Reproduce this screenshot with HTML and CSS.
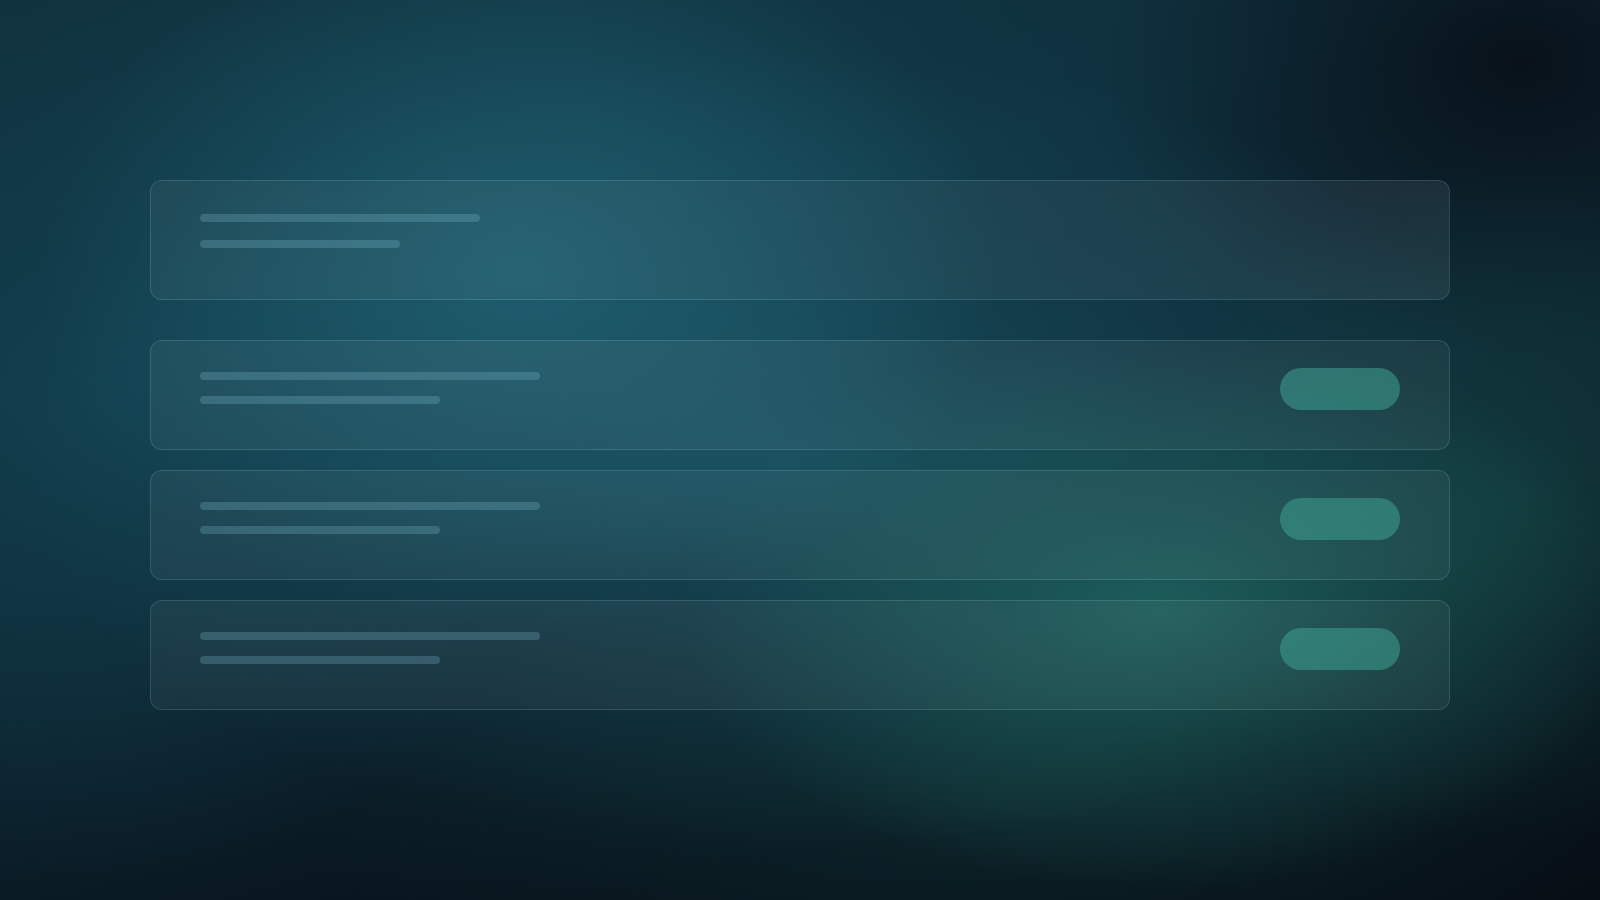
FILE: index.html
```html
<!DOCTYPE html>
<html lang="en">
<head>
<meta charset="utf-8">
<title>List</title>
<link rel="stylesheet" href="styles.css">
</head>
<body>
<main class="stage">
  <section class="card card-head">
    <div class="lines">
      <span class="bar bar-280"></span>
      <span class="bar bar-200"></span>
    </div>
  </section>
  <div class="list">
    <section class="card card-row">
      <div class="lines">
        <span class="bar bar-340"></span>
        <span class="bar bar-240"></span>
      </div>
      <span class="pill"></span>
    </section>
    <section class="card card-row">
      <div class="lines">
        <span class="bar bar-340"></span>
        <span class="bar bar-240"></span>
      </div>
      <span class="pill"></span>
    </section>
    <section class="card card-row">
      <div class="lines">
        <span class="bar bar-340"></span>
        <span class="bar bar-240"></span>
      </div>
      <span class="pill"></span>
    </section>
  </div>
</main>
</body>
</html>
```

FILE: styles.css
```css
html, body {
  margin: 0;
  padding: 0;
  width: 1600px;
  height: 900px;
  overflow: hidden;
  font-family: "Inter", "Liberation Sans", sans-serif;
}

body {
  background-color: #09121a;
  background-image:
    radial-gradient(ellipse 480px 360px at 520px 270px, rgba(34, 104, 122, 0.7), rgba(34, 104, 122, 0) 100%),
    radial-gradient(ellipse 480px 280px at 1160px 610px, rgba(34, 112, 104, 0.7), rgba(34, 112, 104, 0) 100%),
    radial-gradient(ellipse 760px 400px at 780px 450px, rgba(28, 92, 108, 0.7), rgba(28, 92, 108, 0) 100%),
    radial-gradient(ellipse 560px 300px at 560px 110px, rgba(20, 66, 82, 0.55), rgba(20, 66, 82, 0) 100%),
    radial-gradient(ellipse 380px 340px at 1520px 500px, rgba(22, 78, 76, 0.55), rgba(22, 78, 76, 0) 100%),
    radial-gradient(ellipse 480px 480px at 100px 400px, rgba(20, 70, 86, 0.65), rgba(20, 70, 86, 0) 100%),
    radial-gradient(ellipse 700px 240px at 1000px 800px, rgba(18, 58, 60, 0.45), rgba(18, 58, 60, 0) 100%),
    radial-gradient(ellipse 420px 300px at 1520px 60px, rgba(8, 14, 22, 0.9), rgba(8, 14, 22, 0) 100%),
    linear-gradient(165deg, #10303b 0%, #0f3240 30%, #0c2430 55%, #08121b 80%, #060c14 100%);
}

.stage {
  box-sizing: border-box;
  padding: 180px 150px 0;
  display: flex;
  flex-direction: column;
  gap: 40px;
}

.list {
  display: flex;
  flex-direction: column;
  gap: 20px;
}

.card {
  box-sizing: border-box;
  width: 1300px;
  border: 1px solid rgba(150, 210, 220, 0.18);
  border-radius: 12px;
  background: rgba(255, 255, 255, 0.05);
  padding: 0 49px;
}

.card-head {
  height: 120px;
  padding-top: 33px;
  background: linear-gradient(90deg, rgba(255, 255, 255, 0.05), rgba(255, 255, 255, 0.045) 55%, rgba(200, 220, 235, 0.09));
}

.card-head .lines {
  gap: 18px;
}

.card-row {
  height: 110px;
  padding-top: 27px;
  display: flex;
  justify-content: space-between;
  align-items: flex-start;
}

.card-row .lines {
  padding-top: 4px;
}

.lines {
  display: flex;
  flex-direction: column;
  gap: 16px;
}

.bar {
  display: block;
  height: 8px;
  border-radius: 4px;
  background: rgba(150, 215, 230, 0.22);
}

.bar-280 { width: 280px; }
.bar-200 { width: 200px; }
.bar-340 { width: 340px; }
.bar-240 { width: 240px; }

.pill {
  display: block;
  width: 120px;
  height: 42px;
  border-radius: 21px;
  background: rgba(62, 160, 145, 0.55);
}
```
